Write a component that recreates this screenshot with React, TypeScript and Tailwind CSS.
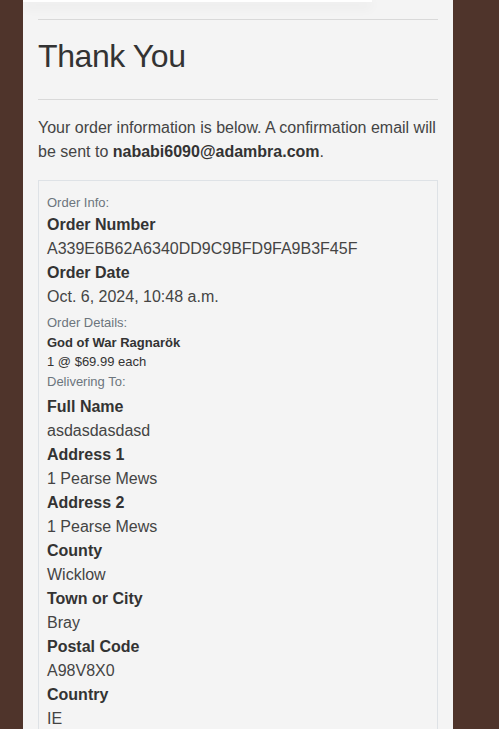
export default function App() {
  const fields: [string, string][] = [
    ["Full Name", "asdasdasdasd"],
    ["Address 1", "1 Pearse Mews"],
    ["Address 2", "1 Pearse Mews"],
    ["County", "Wicklow"],
    ["Town or City", "Bray"],
    ["Postal Code", "A98V8X0"],
    ["Country", "IE"],
  ];

  return (
    <div className="min-h-screen bg-[#4f342b] font-['Liberation_Sans',Arial,sans-serif]">
      <div className="ml-[23px] w-[430px] min-h-screen bg-[#f4f4f4] overflow-hidden">
        {/* top card edge */}
        <div className="h-[2px] w-[349px] bg-white shadow-[0_4px_12px_rgba(0,0,0,0.14)]" />

        <div className="px-[15px]">
          <hr className="mt-[17px] border-t border-[#d9d9d9]" />
          <h1 className="mt-[16px] text-[32px] leading-[40px] tracking-[-0.4px] text-[#333]">
            Thank You
          </h1>
          <hr className="mt-[23px] border-t border-[#d9d9d9]" />

          <p className="mt-[16px] text-[16px] leading-[24px] text-[#444]">
            Your order information is below. A confirmation email will be sent to{" "}
            <strong className="font-bold text-[#333]">nababi6090@adambra.com</strong>.
          </p>

          <div className="mt-[16px] border border-[#dee2e6] px-[8px] pt-[11px] pb-4">
            <div className="text-[13px] leading-[21px] text-[#6c757d]">Order Info:</div>
            <div className="text-[16px] leading-[24px] font-bold text-[#333]">Order Number</div>
            <div className="text-[16px] leading-[24px] text-[#444]">A339E6B62A6340DD9C9BFD9FA9B3F45F</div>
            <div className="text-[16px] leading-[24px] font-bold text-[#333]">Order Date</div>
            <div className="text-[16px] leading-[24px] text-[#444]">Oct. 6, 2024, 10:48 a.m.</div>

            <div className="mt-[3px] text-[13px] leading-[21px] text-[#6c757d]">Order Details:</div>
            <div className="text-[13px] leading-[19px] font-bold text-[#333]">God of War Ragnarök</div>
            <div className="text-[13px] leading-[19px] text-[#333]">1 @ $69.99 each</div>
            <div className="text-[13px] leading-[21px] text-[#6c757d]">Delivering To:</div>

            <div className="mt-[3px] flex flex-col">
              {fields.map(([label, value]) => (
                <div key={label}>
                  <div className="text-[16px] leading-[24px] font-bold text-[#333]">{label}</div>
                  <div className="text-[16px] leading-[24px] text-[#444]">{value}</div>
                </div>
              ))}
            </div>
          </div>
        </div>
      </div>
    </div>
  );
}
